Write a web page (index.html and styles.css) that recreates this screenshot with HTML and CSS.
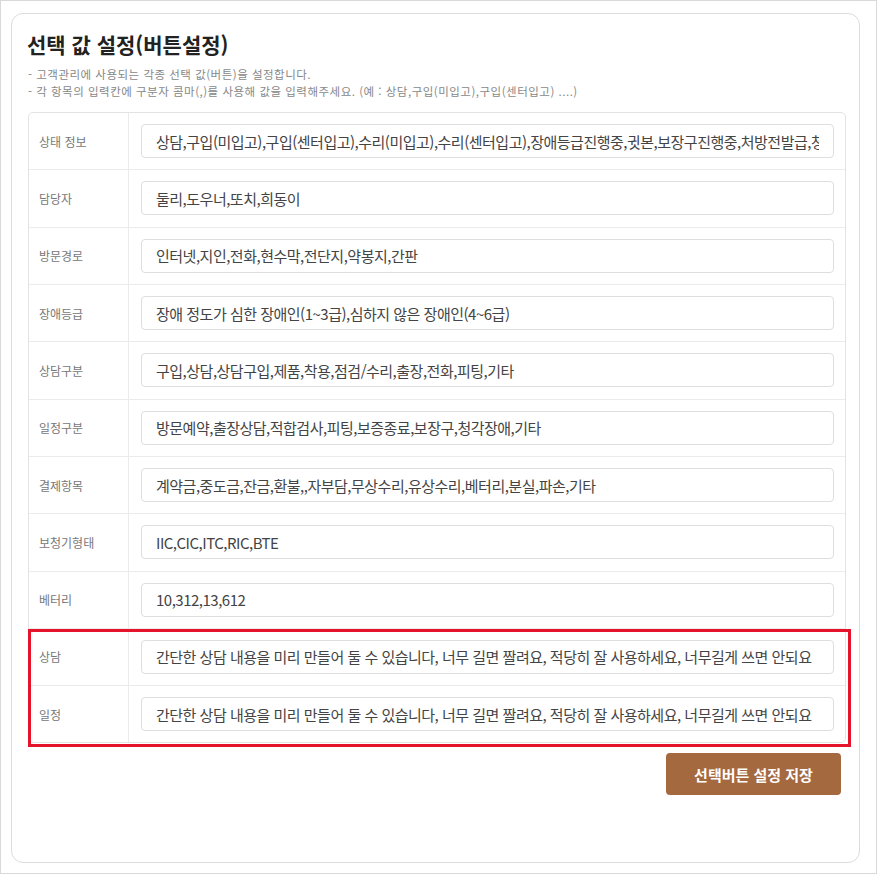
FILE: index.html
```html
<!DOCTYPE html>
<html lang="ko">
<head>
  <meta charset="UTF-8">
  <meta name="viewport" content="width=device-width, initial-scale=1.0">
  <title>선택 값 설정(버튼설정)</title>
  <link rel="stylesheet" href="styles.css">
</head>
<body>
  <div class="frame">
    <div class="card">
      <h1>선택 값 설정(버튼설정)</h1>
      <p class="desc">- 고객관리에 사용되는 각종 선택 값(버튼)을 설정합니다.</p>
      <p class="desc">- 각 항목의 입력칸에 구분자 콤마(,)를 사용해 값을 입력해주세요. (예 : 상담,구입(미입고),구입(센터입고) ....)</p>

      <div class="setting-table">
        <div class="row">
          <div class="label">상태 정보</div>
          <div class="field"><input type="text" value="상담,구입(미입고),구입(센터입고),수리(미입고),수리(센터입고),장애등급진행중,귓본,보장구진행중,처방전발급,청구완료,기타"></div>
        </div>
        <div class="row">
          <div class="label">담당자</div>
          <div class="field"><input type="text" value="둘리,도우너,또치,희동이"></div>
        </div>
        <div class="row">
          <div class="label">방문경로</div>
          <div class="field"><input type="text" value="인터넷,지인,전화,현수막,전단지,약봉지,간판"></div>
        </div>
        <div class="row">
          <div class="label">장애등급</div>
          <div class="field"><input type="text" value="장애 정도가 심한 장애인(1~3급),심하지 않은 장애인(4~6급)"></div>
        </div>
        <div class="row">
          <div class="label">상담구분</div>
          <div class="field"><input type="text" value="구입,상담,상담구입,제품,착용,점검/수리,출장,전화,피팅,기타"></div>
        </div>
        <div class="row">
          <div class="label">일정구분</div>
          <div class="field"><input type="text" value="방문예약,출장상담,적합검사,피팅,보증종료,보장구,청각장애,기타"></div>
        </div>
        <div class="row">
          <div class="label">결제항목</div>
          <div class="field"><input type="text" value="계약금,중도금,잔금,환불,,자부담,무상수리,유상수리,베터리,분실,파손,기타"></div>
        </div>
        <div class="row">
          <div class="label">보청기형태</div>
          <div class="field"><input type="text" value="IIC,CIC,ITC,RIC,BTE"></div>
        </div>
        <div class="row">
          <div class="label">베터리</div>
          <div class="field"><input type="text" value="10,312,13,612"></div>
        </div>
        <div class="highlight">
          <div class="row">
            <div class="label">상담</div>
            <div class="field"><input type="text" value="간단한 상담 내용을 미리 만들어 둘 수 있습니다, 너무 길면 짤려요, 적당히 잘 사용하세요, 너무길게 쓰면 안되요"></div>
          </div>
          <div class="row">
            <div class="label">일정</div>
            <div class="field"><input type="text" value="간단한 상담 내용을 미리 만들어 둘 수 있습니다, 너무 길면 짤려요, 적당히 잘 사용하세요, 너무길게 쓰면 안되요"></div>
          </div>
        </div>
      </div>

      <div class="actions">
        <button type="button" class="save-btn">선택버튼 설정 저장</button>
      </div>
    </div>
  </div>
</body>
</html>
```

FILE: styles.css
```css
* {
  box-sizing: border-box;
}
body {
  margin: 0;
  font-family: "Noto Sans CJK KR", "Noto Sans", sans-serif;
  background: #fff;
}
.frame {
  width: 877px;
  height: 874px;
  border: 1px solid #d9d9d9;
  padding: 12px 16px 0 10px;
}
.card {
  height: 850px;
  border: 1px solid #dcdcdc;
  border-radius: 12px;
  padding: 14px 14px 0 16px;
}
h1 {
  margin: 0 0 6px -1px;
  font-size: 21px;
  line-height: 32px;
  font-weight: 700;
  color: #222;
}
.desc {
  margin: 0;
  font-size: 11.5px;
  line-height: 17px;
  letter-spacing: 0.5px;
  color: #888;
}
.setting-table {
  margin-top: 12px;
  border: 1px solid #e3e3e3;
  border-radius: 5px;
  width: 818px;
}
.row {
  display: flex;
  border-bottom: 1px solid #ebebeb;
}
.row:last-child {
  border-bottom: none;
}
.label {
  width: 100px;
  flex: none;
  border-right: 1px solid #ebebeb;
  display: flex;
  align-items: center;
  padding-left: 10px;
  font-size: 12px;
  color: #777;
}
.field {
  flex: 1;
  padding: 11.16px 11px 11.16px 12px;
}
.field input {
  width: 100%;
  height: 34px;
  border: 1px solid #dedede;
  border-radius: 4px;
  padding: 0 14px;
  font-family: "Noto Sans CJK KR", "Noto Sans", sans-serif;
  font-size: 15px;
  letter-spacing: -0.5px;
  color: #444;
  background: #fff;
  outline: none;
}
.highlight {
  position: relative;
}
.highlight::after {
  content: "";
  position: absolute;
  top: 0;
  left: -1px;
  right: -6px;
  bottom: -5px;
  border: 3px solid #e5142b;
  pointer-events: none;
}
.actions {
  display: flex;
  justify-content: flex-end;
  width: 813px;
  margin-top: 10px;
}
.save-btn {
  width: 175px;
  height: 42px;
  border: none;
  border-radius: 4px;
  background: #a5693f;
  color: #fff;
  font-family: "Noto Sans CJK KR", "Noto Sans", sans-serif;
  font-size: 15px;
  font-weight: 700;
  cursor: pointer;
}
```
